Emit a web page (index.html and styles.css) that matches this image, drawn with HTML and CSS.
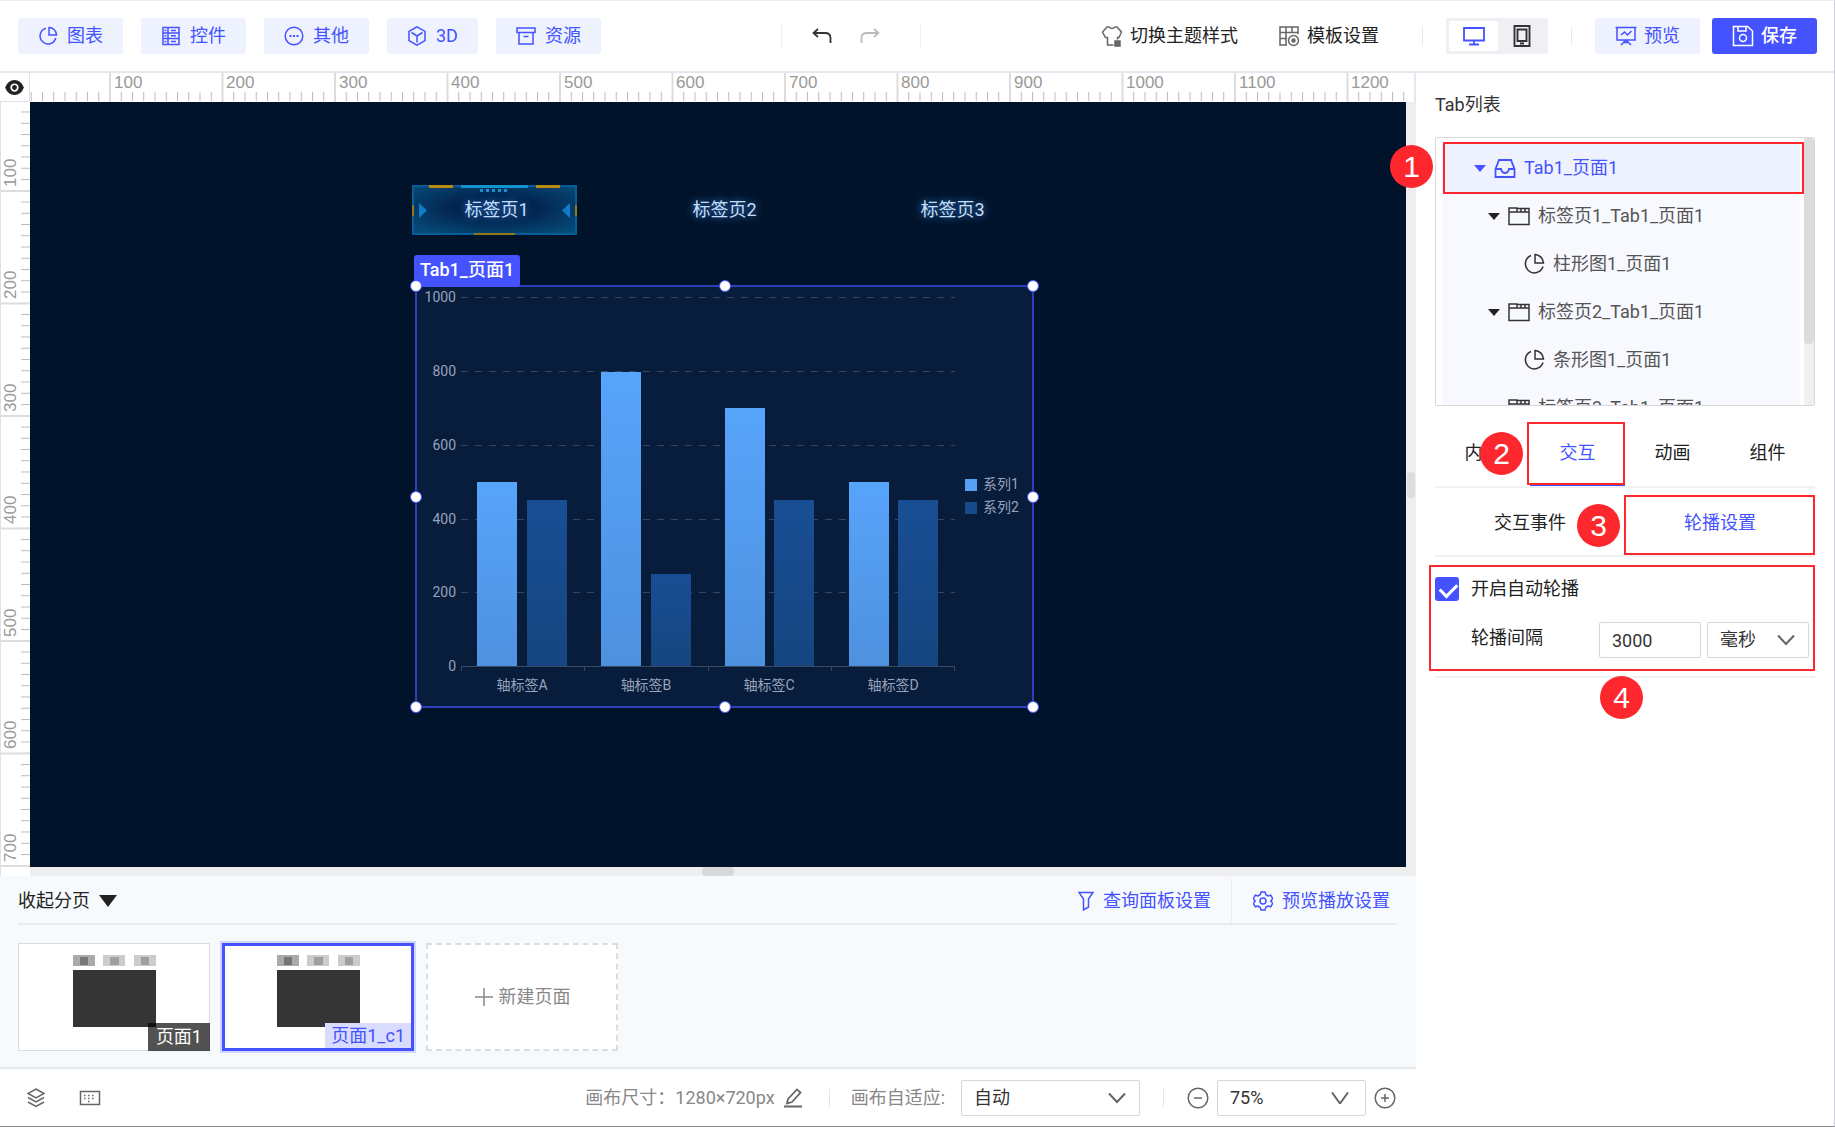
FILE: index.html
```html
<!DOCTYPE html>
<html lang="zh-CN">
<head>
<meta charset="utf-8">
<title>大屏编辑器</title>
<link rel="stylesheet" href="styles.css">
</head>
<body>
<header class="topbar">
  <nav class="tools">
    <button class="btn" type="button"><svg class="ico" viewBox="0 0 20 20"><path d="M8 2.2a8 8 0 1 0 9.800 9.800M11 1.500v7.500h7.500a7.500 7.500 0 0 0-7.500-7.500z"/></svg>图表</button>
    <button class="btn" type="button"><svg class="ico" viewBox="0 0 20 20"><path d="M2 1.500h16v17H2zM2 7h16M2 12.500h16M7 1.500v17M10 4.500h5M10 9.800h5M10 15.500h5M3.500 4.500h2M3.500 9.800h2M3.500 15.500h2"/></svg>控件</button>
    <button class="btn" type="button"><svg class="ico" viewBox="0 0 20 20"><circle cx="10" cy="10" r="8.800"/><path d="M5.500 10h2M9 10h2M12.500 10h2" stroke-width="2"/></svg>其他</button>
    <button class="btn" type="button"><svg class="ico" viewBox="0 0 20 20"><path d="M10 .8l8 4.600v9.200l-8 4.600-8-4.600V5.400zM4.500 6.500L10 10l5.500-3.500M10 10v6.500"/></svg>3D</button>
    <button class="btn" type="button"><svg class="ico" viewBox="0 0 20 20"><path d="M1 2h18v4.500H1zM3 6.500V18h14V6.500M7.500 10.500h5"/></svg>资源</button>
  </nav>
  <div class="history">
    <button class="icon-btn" type="button" aria-label="撤销"><svg class="ico" viewBox="0 0 20 20"><path d="M6 3L1.500 7 6 11M1.500 7H13q5.500 0 5.500 5v5" stroke-width="1.800"/></svg></button>
    <button class="icon-btn faded" type="button" aria-label="重做"><svg class="ico" viewBox="0 0 20 20"><path d="M14 3l4.500 4-4.500 4M18.500 7H7q-5.500 0-5.500 5v5" stroke-width="1.800"/></svg></button>
  </div>
  <div class="settings">
    <button class="text-btn" type="button"><svg class="ico wide" viewBox="0 0 22 22"><path d="M12.500 20H6.500V12.500H4.500L1.500 7 6 2h2q3 3 6 0h2l4.500 5-2.500 5.500H16.500v2"/><rect x="14" y="16" width="5" height="5" fill="currentColor"/></svg>切换主题样式</button>
    <button class="text-btn" type="button"><svg class="ico wide" viewBox="0 0 22 22"><path d="M20 9V2H2v18h7M2 7.500h18M2 13.500h7M8 7.500V20M8 2v5.500M14 2v5.500"/><circle cx="15.500" cy="15.500" r="5"/><circle cx="15.500" cy="15.500" r="1.500" fill="currentColor"/></svg>模板设置</button>
  </div>
  <div class="devices">
    <button class="device on" type="button" aria-label="电脑"><svg class="ico wide" viewBox="0 0 22 22"><path d="M1 3h20v12.500H1zM11 15.500V19M6 19.500h10" stroke-width="1.800"/></svg></button>
    <button class="device" type="button" aria-label="平板"><svg class="ico wide" viewBox="0 0 22 22"><path d="M3.500 1h15v20h-15zM6.500 4.500h9v11.500h-9zM9 18.500h4" stroke-width="1.900"/></svg></button>
  </div>
  <div class="actions">
    <button class="btn" type="button"><svg class="ico wide" viewBox="0 0 22 22"><path d="M.5 2.500h21M2 2.500v12.500h18V2.500M6 10l3.500-3 3 3L16.500 6M11 15l-5 5M11 15l5 5M8 17.500h6"/></svg>预览</button>
    <button class="btn primary" type="button"><svg class="ico wide" viewBox="0 0 22 22"><path d="M1.500 1.500h14l5 4.500v14.500h-19zM6 1.500v4.500h8V1.500"/><circle cx="11" cy="13" r="3.500"/></svg>保存</button>
  </div>
</header>
<div class="body">
  <main class="work">
    <section class="board">
      <div class="corner"><svg viewBox="0 0 20 16" width="20" height="16"><path d="M0 8Q3 0 10 0t10 8q-3 8-10 8T0 8z" fill="#222"/><circle cx="10" cy="8" r="3.500" fill="none" stroke="#fff" stroke-width="1.800"/></svg></div>
      <div class="ruler-x">
        <svg width="100%" height="29">
          <defs>
            <pattern id="tx" x=".75" width="11.25" height="29" patternUnits="userSpaceOnUse"><path d="M.5 19v9" stroke="#bbb"/></pattern>
            <pattern id="mx" x="79" width="112.500" height="29" patternUnits="userSpaceOnUse"><path d="M1 0v29" stroke="#ddd" stroke-width="2"/></pattern>
          </defs>
          <rect width="100%" height="29" fill="url(#tx)"/><rect width="100%" height="29" fill="url(#mx)"/>
          <g><text x="84" y="15">100</text><text x="196" y="15">200</text><text x="309" y="15">300</text><text x="421" y="15">400</text><text x="534" y="15">500</text><text x="646" y="15">600</text><text x="759" y="15">700</text><text x="871" y="15">800</text><text x="984" y="15">900</text><text x="1096" y="15">1000</text><text x="1209" y="15">1100</text><text x="1321" y="15">1200</text></g>
        </svg>
      </div>
      <div class="ruler-y">
        <svg width="30" height="100%">
          <defs>
            <pattern id="ty" y="9.500" width="30" height="11.25" patternUnits="userSpaceOnUse"><path d="M20 .5h9" stroke="#bbb"/></pattern>
            <pattern id="my" y="88" width="30" height="112.500" patternUnits="userSpaceOnUse"><path d="M0 1h30" stroke="#ddd" stroke-width="2"/></pattern>
          </defs>
          <rect width="30" height="100%" fill="url(#ty)"/><rect width="30" height="100%" fill="url(#my)"/>
          <g><text transform="translate(15 85) rotate(-90)">100</text><text transform="translate(15 197) rotate(-90)">200</text><text transform="translate(15 310) rotate(-90)">300</text><text transform="translate(15 422) rotate(-90)">400</text><text transform="translate(15 535) rotate(-90)">500</text><text transform="translate(15 647) rotate(-90)">600</text><text transform="translate(15 760) rotate(-90)">700</text></g>
        </svg>
      </div>
      <div class="stage">
        <div class="canvas">
          <div class="tabstrip">
            <button class="stage-tab active" type="button">
              <svg class="frame" viewBox="0 0 165 50" aria-hidden="true">
                <defs><radialGradient id="glow" cx=".5" cy=".45" r=".65"><stop offset=".3" stop-color="#02204a"/><stop offset="1" stop-color="#064a78"/></radialGradient></defs>
                <rect x="1" y="1" width="163" height="48" fill="url(#glow)" stroke="#075d98" stroke-width="2"/>
                <path d="M49 1.500h67" stroke="#1593cf" stroke-width="3"/>
                <path d="M17 1.500h24M124 1.500h24" stroke="#b98a0c" stroke-width="3"/>
                <path d="M62 49h41M1 20v11M164 20v11" stroke="#8b7a1c" stroke-width="2"/>
                <path d="M68 5.500h30" stroke="#1c8fd0" stroke-width="3" stroke-dasharray="3 3"/>
                <path d="M7 18l8 7.500L7 33zM158 18l-8 7.500 8 7.500z" fill="#0e7cc9"/>
              </svg>
              <span>标签页1</span>
            </button>
            <button class="stage-tab" type="button"><span>标签页2</span></button>
            <button class="stage-tab" type="button"><span>标签页3</span></button>
          </div>
          <div class="selection">
            <div class="sel-label">Tab1_页面1</div>
            <svg class="chart" viewBox="0 0 615 419" width="615" height="419">
              <defs>
                <linearGradient id="s1" x2="0" y2="1"><stop stop-color="#57a4fb"/><stop offset="1" stop-color="#4e91df"/></linearGradient>
                <linearGradient id="s2" x2="0" y2="1"><stop stop-color="#194e94"/><stop offset="1" stop-color="#154680"/></linearGradient>
              </defs>
              <g class="grid"><path d="M44 10.500h494M44 84.500h494M44 158.500h494M44 232.500h494M44 305.500h494"/></g>
              <path class="axis" d="M44 379.500h494M44.500 380v4M167.500 380v4M291.500 380v4M414.500 380v4M537.500 380v4"/>
              <g fill="url(#s1)"><rect x="60" y="195" width="40" height="184"/><rect x="184" y="85" width="40" height="294"/><rect x="308" y="121" width="40" height="258"/><rect x="432" y="195" width="40" height="184"/></g>
              <g fill="url(#s2)"><rect x="110" y="213" width="40" height="166"/><rect x="234" y="287" width="40" height="92"/><rect x="357" y="213" width="40" height="166"/><rect x="481" y="213" width="40" height="166"/></g>
              <g text-anchor="end"><text x="39" y="15">1000</text><text x="39" y="89">800</text><text x="39" y="163">600</text><text x="39" y="237">400</text><text x="39" y="310">200</text><text x="39" y="384">0</text></g>
              <g text-anchor="middle"><text x="105" y="403">轴标签A</text><text x="229" y="403">轴标签B</text><text x="352" y="403">轴标签C</text><text x="476" y="403">轴标签D</text></g>
              <rect x="548" y="192" width="12" height="12" fill="#559ef3"/><rect x="548" y="215" width="12" height="12" fill="#174a8c"/>
              <g><text x="566" y="202">系列1</text><text x="566" y="225">系列2</text></g>
            </svg>
            <i class="handle l t"></i><i class="handle c t"></i><i class="handle r t"></i>
            <i class="handle l m"></i><i class="handle r m"></i>
            <i class="handle l b"></i><i class="handle c b"></i><i class="handle r b"></i>
          </div>
        </div>
        <div class="track-y"><i></i></div>
        <div class="track-x"><i></i></div>
      </div>
    </section>
    <section class="pages">
      <div class="pages-head">
        <button class="text-btn collapse" type="button">收起分页<svg viewBox="0 0 18 12" width="18" height="12"><path d="M0 0h18l-9 12z" fill="#222"/></svg></button>
        <div class="pages-links">
          <button class="text-btn link" type="button"><svg class="ico slim" viewBox="0 0 16 20"><path d="M1 1.500h14L10.500 8v8l-5 3V8z"/></svg>查询面板设置</button>
          <button class="text-btn link" type="button"><svg class="ico" viewBox="0 0 20 20"><path d="M8 1h4l.8 2.700 2.200 1.300 2.700-.8 2 3.500L17.800 10l1.900 2.300-2 3.500-2.700-.8-2.200 1.300L12 19H8l-.8-2.700L5 15l-2.700.8-2-3.500L2.200 10 .3 7.700l2-3.500L5 5l2.200-1.300z"/><circle cx="10" cy="10" r="3"/></svg>预览播放设置</button>
        </div>
      </div>
      <div class="thumbs">
        <button class="thumb" type="button">
          <svg viewBox="0 0 83 72" width="83" height="72"><path d="M0 0h22v11H0z" fill="#aaa"/><path d="M7 2h8v8H7z" fill="#777"/><path d="M30 0h22v11H30zM61 0h22v11H61z" fill="#ccc"/><path d="M37 2h9v8h-9zM68 2h8v8h-8z" fill="#a0a0a0"/><path d="M0 15h83v57H0z" fill="#353535"/></svg>
          <span class="tag">页面1</span>
        </button>
        <button class="thumb current" type="button">
          <svg viewBox="0 0 83 72" width="83" height="72"><path d="M0 0h22v11H0z" fill="#aaa"/><path d="M7 2h8v8H7z" fill="#777"/><path d="M30 0h22v11H30zM61 0h22v11H61z" fill="#ccc"/><path d="M37 2h9v8h-9zM68 2h8v8h-8z" fill="#a0a0a0"/><path d="M0 15h83v57H0z" fill="#353535"/></svg>
          <span class="tag">页面1_c1</span>
        </button>
        <button class="thumb new" type="button"><svg class="ico" viewBox="0 0 20 20"><path d="M10 1v18M1 10h18"/></svg>新建页面</button>
      </div>
    </section>
    <footer class="status">
      <div class="status-left">
        <button class="icon-btn" type="button" aria-label="图层"><svg class="ico" viewBox="0 0 20 20"><path d="M10 1l8 4.500-8 4.500-8-4.500zM2 9.500l8 4.500 8-4.500M2 14l8 4.500 8-4.500"/></svg></button>
        <button class="icon-btn" type="button" aria-label="键盘"><svg class="ico wide" viewBox="0 0 22 22"><path d="M1.500 4.500h19v13h-19z"/><path d="M5 8.500h12M5 11.500h12M9 14.500h4" stroke-dasharray="1.500 2.500"/></svg></button>
      </div>
      <div class="status-size">画布尺寸：<span class="dim">1280×720px</span><button class="icon-btn" type="button" aria-label="编辑"><svg class="ico" viewBox="0 0 20 20"><path d="M5 11L14 1.500l3.500 3L9 14l-5 1.500zM1 18.500h18" stroke-width="1.800"/></svg></button></div>
      <div class="status-fit"><label for="fit">画布自适应:</label><div class="select fit"><select id="fit"><option>自动</option></select><svg class="chev" viewBox="0 0 18 12"><path d="M1 1.500l8 8.500 8-8.500"/></svg></div></div>
      <div class="status-zoom">
        <button class="icon-btn" type="button" aria-label="缩小"><svg class="ico wide" viewBox="0 0 22 22"><circle cx="11" cy="11" r="9.800"/><path d="M7 11h8"/></svg></button>
        <div class="select zoom"><select aria-label="缩放"><option>75%</option></select><svg class="chev" viewBox="0 0 18 12"><path d="M1 .5l8 11 8-11"/></svg></div>
        <button class="icon-btn" type="button" aria-label="放大"><svg class="ico wide" viewBox="0 0 22 22"><circle cx="11" cy="11" r="9.800"/><path d="M7 11h8M11 7v8"/></svg></button>
      </div>
    </footer>
  </main>
  <aside class="panel">
    <h2>Tab列表</h2>
    <div class="tree">
      <ul>
        <li class="lv1 selected"><i class="caret"></i><svg class="ico wide" viewBox="0 0 22 22"><path d="M1.500 12L5 3h12l3.500 9v8h-19zM1.500 12H7q1 4 4 4t4-4h5.500" stroke-width="1.800"/></svg>Tab1_页面1</li>
        <li class="lv2"><i class="caret"></i><svg class="ico wide" viewBox="0 0 22 22"><path d="M1 19.500V3h8v4h12v12.500zM1 7h8M9 3.500h12V7M13 3.500V7M17 3.500V7"/></svg>标签页1_Tab1_页面1</li>
        <li class="lv3"><svg class="ico wide" viewBox="0 0 22 22"><path d="M8 2.500a9 9 0 1 0 12 11M12 1.500v8.500h8.500a9 9 0 0 0-8.500-8.500z"/></svg>柱形图1_页面1</li>
        <li class="lv2"><i class="caret"></i><svg class="ico wide" viewBox="0 0 22 22"><path d="M1 19.500V3h8v4h12v12.500zM1 7h8M9 3.500h12V7M13 3.500V7M17 3.500V7"/></svg>标签页2_Tab1_页面1</li>
        <li class="lv3"><svg class="ico wide" viewBox="0 0 22 22"><path d="M8 2.500a9 9 0 1 0 12 11M12 1.500v8.500h8.500a9 9 0 0 0-8.500-8.500z"/></svg>条形图1_页面1</li>
        <li class="lv2"><i class="caret"></i><svg class="ico wide" viewBox="0 0 22 22"><path d="M1 19.500V3h8v4h12v12.500zM1 7h8M9 3.500h12V7M13 3.500V7M17 3.500V7"/></svg>标签页3_Tab1_页面1</li>
      </ul>
      <div class="tree-bar"><i></i></div>
    </div>
    <div class="tabs main-tabs">
      <button type="button">内容</button><button class="on" type="button">交互</button><button type="button">动画</button><button type="button">组件</button>
    </div>
    <div class="tabs sub-tabs">
      <button type="button">交互事件</button><button class="on" type="button">轮播设置</button>
    </div>
    <form class="carousel">
      <label class="check"><input type="checkbox" checked>开启自动轮播</label>
      <div class="field"><label for="gap">轮播间隔</label><input id="gap" type="text" value="3000"><div class="select unit"><select aria-label="单位"><option>毫秒</option></select><svg class="chev" viewBox="0 0 18 12"><path d="M1 1.500l8 8.500 8-8.500"/></svg></div></div>
    </form>
    <div class="mark box1"></div><div class="mark box2"></div><div class="mark box3"></div><div class="mark box4"></div>
    <b class="num n1">1</b><b class="num n2">2</b><b class="num n3">3</b><b class="num n4">4</b>
  </aside>
</div>
</body>
</html>
```
FILE: styles.css
```css
* { box-sizing: border-box; }
body {
  margin: 0;
  min-height: 100vh;
  display: flex;
  flex-direction: column;
  background: #fff;
  color: #333;
  font: 18px/24px Roboto, "Noto Sans CJK SC", sans-serif;
  border-top: 1px solid #eee;
  border-right: 1px solid #ccd0d6;
  border-bottom: 1px solid #888;
}
button, input, select { font: inherit; color: inherit; margin: 0; }
button { border: 0; background: none; padding: 0; display: flex; align-items: center; white-space: nowrap; }
.ico { width: 20px; height: 20px; flex: none; fill: none; stroke: currentColor; stroke-width: 1.5; }
.ico.wide { width: 22px; height: 22px; }
.ico.slim { width: 16px; }

/* top bar */
.topbar {
  display: flex;
  align-items: center;
  height: 72px;
  padding: 0 17px 0 18px;
  border-bottom: 2px solid #e4e6f0;
}
.tools { display: flex; gap: 18px; }
.btn {
  height: 36px;
  padding: 0 20px;
  gap: 9px;
  background: #eef2ff;
  color: #4452ff;
  border-radius: 3px;
}
.btn.primary { background: #4452ff; color: #fff; font-weight: 500; }
.history {
  display: flex;
  gap: 28px;
  margin-left: 180px;
  padding: 2px 40px 2px 30px;
  border: 1px solid #eee;
  border-width: 0 1px;
}
.history .icon-btn { color: #333; }
.history .faded { color: #bbb; }
.settings { display: flex; gap: 40px; margin-left: auto; padding-right: 67px; }
.text-btn { gap: 7px; color: #222; }
.text-btn .ico { color: #666; }
.devices {
  display: flex;
  margin-right: 25px;
  padding: 3px;
  background: #eff0f4;
  border-radius: 3px;
  position: relative;
}
.devices::before, .devices::after { content: ""; position: absolute; top: 9px; height: 18px; width: 1px; background: #e8e8e8; }
.devices::before { left: -24px; }
.devices::after { right: -24px; }
.device { height: 30px; width: 47px; justify-content: center; }
.device.on { background: #fff; color: #4452ff; width: 49px; }
.actions { display: flex; gap: 12px; margin-left: 22px; }
.actions .btn { gap: 7px; }

/* columns */
.body { flex: 1; display: grid; grid-template-columns: minmax(0, 1fr) 418px; }
.work { display: flex; flex-direction: column; }
.board {
  flex: 1;
  display: grid;
  grid-template: 29px minmax(740px, 1fr) / 30px minmax(0, 1fr);
}
.corner { display: flex; align-items: center; justify-content: center; border-right: 1px solid #e2e2ea; border-bottom: 1px solid #e2e2ea; }
.corner svg { width: 19px; height: 15px; }
.ruler-x, .ruler-y { overflow: hidden; }
.ruler-x svg, .ruler-y svg { display: block; }
.ruler-x { border-right: 2px solid #e4e6f0; }
.ruler-y { border-left: 1px solid #e0e0ea; }
.ruler-x text, .ruler-y text { font: 17px "Liberation Sans", sans-serif; fill: #999; }

.stage { display: grid; grid-template: minmax(0, 1fr) 9px / minmax(0, 1fr) 10px; background: #eee; }
.canvas { position: relative; background: #00132b; overflow: hidden; }
.track-y, .track-x { display: flex; align-items: center; justify-content: center; }
.track-y i { width: 8px; height: 26px; border-radius: 4px; background: #ddd; }
.track-x i { width: 32px; height: 9px; border-radius: 4px; background: #d8d8d8; }

/* widgets placed freely on the canvas */
.tabstrip { position: absolute; left: 382px; top: 83px; display: flex; gap: 63px; }
.stage-tab { position: relative; width: 165px; height: 50px; justify-content: center; color: #c4defb; text-shadow: 0 0 8px #3f8ee0; }
.stage-tab span { position: relative; padding-left: 4px; }
.frame { position: absolute; inset: 0; }
.selection {
  position: absolute;
  left: 385px;
  top: 183px;
  width: 619px;
  height: 423px;
  border: 2px solid #2e3fb8;
  background: #071d3b;
}
.sel-label {
  position: absolute;
  left: -3px;
  bottom: 419px;
  padding: 3px 6px 5px;
  background: #4452ff;
  color: #fff;
  font-weight: 500;
  border-radius: 3px;
  white-space: nowrap;
}
.handle { position: absolute; width: 12px; height: 12px; border-radius: 50%; background: #fff; border: 1px solid #4452ff; }
.handle.l { left: -7px; }
.handle.c { left: 302px; }
.handle.r { right: -7px; }
.handle.t { top: -7px; }
.handle.m { top: 204px; }
.handle.b { bottom: -7px; }
.chart { display: block; }
.chart text { font-size: 14px; fill: #98a2bb; }
.grid { stroke: #33455f; stroke-dasharray: 7 7; }
.axis { stroke: #3a4a62; fill: none; }

/* page thumbnails */
.pages { background: #f6fafc; padding: 0 20px 16px 18px; }
.pages-head { display: flex; justify-content: space-between; height: 49px; padding-top: 2px; border-bottom: 2px solid #e8ebee; }
.pages-head .text-btn { gap: 9px; }
.pages-links { display: flex; padding-right: 6px; }
.pages-links .link { color: #4452ff; }
.pages-links .link .ico { color: #4452ff; }
.pages-links .link + .link { margin-left: 20px; padding-left: 21px; border-left: 1px solid #eceef2; }
.thumbs { display: flex; gap: 12px; margin-top: 18px; }
.thumb {
  position: relative;
  width: 192px;
  height: 108px;
  padding-top: 11px;
  align-items: flex-start;
  justify-content: center;
  background: #fff;
  border: 1px solid #ddd;
}
.thumb.current { border: 3px solid #4452ff; box-shadow: 0 0 0 2px #d0d6ff; padding-top: 9px; }
.tag { position: absolute; right: -1px; bottom: -1px; padding: 2px 8px; background: rgba(0, 0, 0, .68); color: #fff; }
.current .tag { right: 0; bottom: 0; padding: 1px 6px 0; background: #d9dcff; color: #4452ff; }
.thumb.new { align-items: center; gap: 5px; padding: 0; border: 2px dashed #ddd; color: #888; }

/* status bar */
.status {
  display: flex;
  align-items: center;
  height: 59px;
  padding: 1px 20px 0 0;
  border-top: 2px solid #e6e8f0;
  color: #888;
}
.status .icon-btn { color: #666; }
.status-left { display: flex; gap: 33px; padding-left: 26px; }
.status-size { display: flex; align-items: center; margin-left: auto; padding-right: 26px; }
.status-size .icon-btn { margin-left: 8px; }
.status-fit { display: flex; align-items: center; gap: 16px; position: relative; padding: 0 24px 0 22px; }
.status-fit::before, .status-fit::after { content: ""; position: absolute; top: 9px; width: 1px; height: 18px; background: #e4e4e4; }
.status-fit::before { left: 0; }
.status-fit::after { right: 0; }
.status-zoom { display: flex; align-items: center; gap: 8px; padding-left: 23px; }
.select { position: relative; height: 36px; }
.select select, .field input {
  appearance: none;
  width: 100%;
  height: 36px;
  padding: 0 12px;
  border: 1px solid #d4d6dc;
  border-radius: 2px;
  background: #fff;
  color: #333;
}
.chev { position: absolute; right: 14px; top: 12px; width: 18px; height: 12px; fill: none; stroke: #666; stroke-width: 2; pointer-events: none; }
.fit { width: 179px; }
.zoom { width: 149px; }
.zoom .chev { right: 17px; }

/* right panel */
.panel { position: relative; padding: 20px 19px 0; }
.panel h2 { margin: 0 0 20px; font-size: 18px; font-weight: 400; line-height: 24px; }
.tree { display: flex; justify-content: space-between; height: 269px; padding-left: 6px; border: 1px solid #d8d8d8; border-radius: 2px; overflow: hidden; }
.tree ul { list-style: none; width: 358px; margin: 0; padding: 6px 0 0; }
.tree li { display: flex; align-items: center; gap: 8px; height: 48px; background: #f7f9ff; color: #555; white-space: nowrap; }
.tree li .ico { color: #333; }
.tree li.selected { background: #eef2ff; color: #4452ff; }
.tree li.selected .ico, .selected .caret { color: #4452ff; }
.caret { border: 6px solid transparent; border-top: 7px solid; border-bottom: 0; color: #222; }
.lv1 { padding-left: 32px; }
.lv2 { padding-left: 46px; }
.lv3 { padding-left: 81px; }
.tree-bar { width: 10px; background: #f0f0f0; }
.tree-bar i { display: block; height: 206px; border-radius: 4px; background: #dcdcdc; }
.tabs { display: grid; grid-auto-flow: column; grid-auto-columns: 1fr; border-bottom: 2px solid #f0f1f3; }
.tabs button { justify-content: center; color: #222; border-bottom: 2px solid transparent; }
.tabs button.on { color: #4452ff; border-color: #4452ff; }
.main-tabs { margin-top: 14px; }
.main-tabs button { height: 66px; padding-top: 2px; }
.sub-tabs button { height: 67px; padding-top: 4px; }
.carousel { padding: 20px 6px 18px 0; border-bottom: 2px solid #f0f1f3; color: #222; }
.check { display: flex; align-items: center; gap: 12px; }
.check input {
  appearance: none;
  position: relative;
  width: 24px;
  height: 24px;
  border-radius: 3px;
  background: #4452ff;
}
.check input::after {
  content: "";
  position: absolute;
  left: 8px;
  top: 3px;
  width: 8px;
  height: 14px;
  border: solid #fff;
  border-width: 0 3px 3px 0;
  transform: rotate(45deg);
}
.field { display: grid; grid-template-columns: 1fr 102px 102px; gap: 6px; align-items: center; margin-top: 21px; }
.field > label { padding: 0 0 4px 36px; }

/* numbered call-outs over the panel */
.mark { position: absolute; border: 2px solid #ff272e; pointer-events: none; }
.box1 { left: 27px; top: 69px; width: 361px; height: 52px; }
.box2 { left: 111px; top: 349px; width: 98px; height: 63px; }
.box3 { left: 208px; top: 422px; width: 191px; height: 60px; }
.box4 { left: 13px; top: 492px; width: 386px; height: 106px; }
.num {
  position: absolute;
  width: 43px;
  height: 43px;
  border-radius: 50%;
  background: #ff272e;
  color: #fff;
  font: 30px/43px "Liberation Sans", sans-serif;
  text-align: center;
}
.n1 { left: -26px; top: 72px; }
.n2 { left: 64px; top: 359px; }
.n3 { left: 161px; top: 431px; }
.n4 { left: 184px; top: 603px; }
```
